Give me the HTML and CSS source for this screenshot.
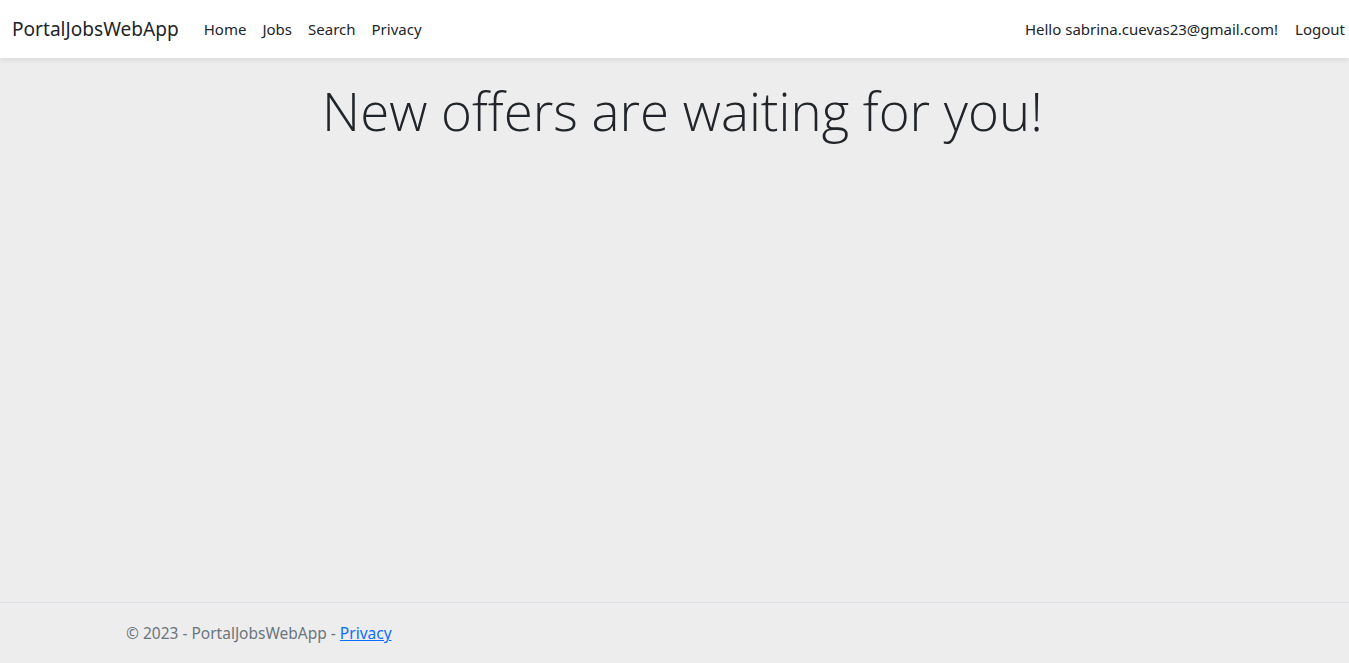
FILE: index.html
```html
<!DOCTYPE html>
<html lang="en">
<head>
<meta charset="utf-8">
<title>PortalJobsWebApp</title>
<link rel="stylesheet" href="styles.css">
</head>
<body>
<div class="page">
  <header class="navbar">
    <a class="brand" href="#">PortalJobsWebApp</a>
    <nav class="nav-main">
      <a href="#">Home</a>
      <a href="#">Jobs</a>
      <a href="#">Search</a>
      <a href="#">Privacy</a>
    </nav>
    <nav class="nav-user">
      <span class="hello">Hello sabrina.cuevas23@gmail.com!</span>
      <a class="logout" href="#">Logout</a>
    </nav>
  </header>
  <main class="main">
    <h1 class="display">New offers are waiting for you!</h1>
  </main>
  <footer class="footer">
    <div class="footer-inner">© 2023 - PortalJobsWebApp - <a href="#">Privacy</a></div>
  </footer>
</div>
</body>
</html>
```
FILE: styles.css
```css
* { box-sizing: border-box; }
html, body { margin: 0; height: 100%; }
body {
  font-family: "Noto Sans", "Open Sans", sans-serif;
  font-size: 16px;
  line-height: 1.5;
  color: #212529;
  background: #ededed;
}
.page {
  min-height: 100vh;
  display: flex;
  flex-direction: column;
}
.navbar {
  height: 58px;
  background: #fff;
  box-shadow: 0 2px 6px rgba(0,0,0,0.08);
  display: flex;
  align-items: center;
  padding: 0 0 0 12px;
}
.brand {
  font-size: 19.1px;
  color: #212529;
  text-decoration: none;
  margin-right: 17px;
}
.nav-main, .nav-user {
  display: flex;
  align-items: center;
}
.nav-main a, .nav-user a, .hello {
  color: #212529;
  text-decoration: none;
  font-size: 15px;
  padding: 8px;
}
.nav-user { margin-left: auto; }
.nav-user .logout { padding-left: 9px; padding-right: 4px; }
.main {
  flex: 1;
  padding-top: 21px;
  padding-left: 16px;
}
.display {
  margin: 0;
  text-align: center;
  font-family: "Open Sans", sans-serif;
  font-weight: 300;
  font-size: 52.8px;
  line-height: 1.2;
}
.footer {
  border-top: 1px solid #dee2e6;
  height: 61px;
  line-height: 60px;
  color: #6c757d;
  font-size: 15.5px;
}
.footer-inner { padding-left: 126px; }
.footer a { color: #0d6efd; }
```
